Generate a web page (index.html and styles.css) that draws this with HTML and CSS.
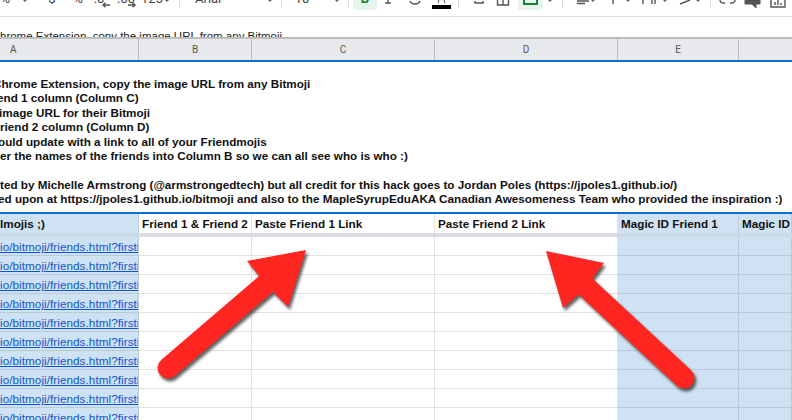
FILE: index.html
```html
<!DOCTYPE html>
<html lang="en">
<head>
<meta charset="utf-8">
<title>Friendmojis sheet</title>
<link rel="stylesheet" href="styles.css">
</head>
<body>
<div class="toolbar">
  <svg class="strip" width="792" height="16" viewBox="0 0 792 16">
    <g class="tt">
      <text x="10" y="3" text-anchor="end">100%</text>
      <text x="52" y="3" text-anchor="middle">$</text>
      <text x="78" y="3" text-anchor="middle">%</text>
      <text x="99" y="3" text-anchor="middle">.0</text>
      <text x="126" y="3" text-anchor="middle">.00</text>
      <text x="152" y="3" text-anchor="middle">123</text>
      <text x="195" y="3">Arial</text>
      <text x="302" y="3" text-anchor="middle">10</text>
    </g>
    <g class="ic">
      <path d="M110 5H103M105.500 2.800L103 5L105.500 7.200"/>
      <path d="M128 5H135M132.500 2.800L135 5L132.500 7.200"/>
      <path d="M410 1Q411 4 415 4Q419 4 420 1"/>
      <path d="M388 0V3M385 3H391"/>
      <path d="M475 1V3H483V1"/>
      <path d="M497.500 0V5H508.500V0M503 0V5"/>
      <path d="M577 1H589M577 3.500H585"/>
      <path d="M613 0V4"/>
      <path d="M643 0V4M652 0V4M655 0V4"/>
      <path d="M680 4L690 0"/>
      <path d="M720 0Q720 3 724 3H725M735 0Q735 3 731 3H730"/>
      <path d="M771 0V7H785V0M775 2V5M778 0V5M781 3V5"/>
    </g>
    <g class="caret">
      <path d="M23 0H27L25 2Z"/><path d="M165 0H169L167 2Z"/><path d="M268 0H272L270 2Z"/>
      <path d="M335 0H339L337 2Z"/><path d="M548 0H552L550 2Z"/><path d="M591 0H595L593 2Z"/>
      <path d="M626 0H630L628 2Z"/><path d="M663 0H667L665 2Z"/><path d="M696 0H700L698 2Z"/>
    </g>
    <g class="sep">
      <path d="M179.500 0V8M281.500 0V8M348.500 0V8M458.500 0V8M562.500 0V8M710.500 0V8"/>
    </g>
    <rect class="on" x="353" y="-3" width="24" height="13" rx="2"/>
    <rect class="on" x="518" y="-3" width="25" height="13" rx="2"/>
    <text class="bold" x="365" y="3" text-anchor="middle">B</text>
    <path class="merge" d="M524 0V4H537V0"/>
    <rect class="black" x="432" y="5" width="19" height="4"/>
    <path class="ink" d="M438 3L439 0M445 3L444 0"/>
    <path class="ink" d="M745 0H760V4H756V8L752 4H745Z"/>
  </svg>
</div>
<div class="formula">hrome Extension, copy the image URL from any Bitmoji</div>
<div class="cols">
  <div class="col a">A</div><div class="col b">B</div><div class="col c">C</div><div class="col d">D</div><div class="col e">E</div><div class="col f"></div>
</div>
<div class="notes">
  <p class="cut7">Chrome Extension, copy the image URL from any Bitmoji</p>
  <p class="cut3">end 1 column (Column C)</p>
  <p class="cut1">image URL for their Bitmoji</p>
  <p>riend 2 column (Column D)</p>
  <p class="cut2">ould update with a link to all of your Friendmojis</p>
  <p>er the names of the friends into Column B so we can all see who is who :)</p>
  <p>&nbsp;</p>
  <p>ted by Michelle Armstrong (@armstrongedtech) but all credit for this hack goes to Jordan Poles (https://jpoles1.github.io/)</p>
  <p class="cut2">ed upon at https://jpoles1.github.io/bitmoji and also to the MapleSyrupEduAKA Canadian Awesomeness Team who provided the inspiration :)</p>
</div>
<div class="sheet">
  <div class="row titles">
    <div class="cell blue flush">lmojis ;)</div><div class="cell">Friend 1 &amp; Friend 2</div><div class="cell">Paste Friend 1 Link</div><div class="cell">Paste Friend 2 Link</div><div class="cell blue">Magic ID Friend 1</div><div class="cell blue">Magic ID</div>
  </div>
  <div class="band"><span class="bb a2"></span><span class="bw"></span><span class="bb e2"></span><span class="bb f2"></span></div>
  <div class="row"><div class="cell blue"><a href="#">io/bitmoji/friends.html?firstid=</a></div><div class="cell"></div><div class="cell"></div><div class="cell"></div><div class="cell blue"></div><div class="cell blue"></div></div>
  <div class="row"><div class="cell blue"><a href="#">io/bitmoji/friends.html?firstid=</a></div><div class="cell"></div><div class="cell"></div><div class="cell"></div><div class="cell blue"></div><div class="cell blue"></div></div>
  <div class="row"><div class="cell blue"><a href="#">io/bitmoji/friends.html?firstid=</a></div><div class="cell"></div><div class="cell"></div><div class="cell"></div><div class="cell blue"></div><div class="cell blue"></div></div>
  <div class="row"><div class="cell blue"><a href="#">io/bitmoji/friends.html?firstid=</a></div><div class="cell"></div><div class="cell"></div><div class="cell"></div><div class="cell blue"></div><div class="cell blue"></div></div>
  <div class="row"><div class="cell blue"><a href="#">io/bitmoji/friends.html?firstid=</a></div><div class="cell"></div><div class="cell"></div><div class="cell"></div><div class="cell blue"></div><div class="cell blue"></div></div>
  <div class="row"><div class="cell blue"><a href="#">io/bitmoji/friends.html?firstid=</a></div><div class="cell"></div><div class="cell"></div><div class="cell"></div><div class="cell blue"></div><div class="cell blue"></div></div>
  <div class="row"><div class="cell blue"><a href="#">io/bitmoji/friends.html?firstid=</a></div><div class="cell"></div><div class="cell"></div><div class="cell"></div><div class="cell blue"></div><div class="cell blue"></div></div>
  <div class="row"><div class="cell blue"><a href="#">io/bitmoji/friends.html?firstid=</a></div><div class="cell"></div><div class="cell"></div><div class="cell"></div><div class="cell blue"></div><div class="cell blue"></div></div>
  <div class="row"><div class="cell blue"><a href="#">io/bitmoji/friends.html?firstid=</a></div><div class="cell"></div><div class="cell"></div><div class="cell"></div><div class="cell blue"></div><div class="cell blue"></div></div>
  <div class="row"><div class="cell blue"><a href="#">io/bitmoji/friends.html?firstid=</a></div><div class="cell"></div><div class="cell"></div><div class="cell"></div><div class="cell blue"></div><div class="cell blue"></div></div>
</div>
<svg class="arrows" width="792" height="420" viewBox="0 0 792 420">
  <g class="arrow">
    <path class="shaft" d="M168 368L266 284"/>
    <path class="tip" d="M306 250L247 261L260 277L273 292L288 307Z"/>
  </g>
  <g class="arrow">
    <path class="shaft" d="M684 378L585 286"/>
    <path class="tip" d="M546 251L604 263L592 279L579 294L563 308Z"/>
  </g>
</svg>
</body>
</html>
```
FILE: styles.css
```css
html,body{margin:0;padding:0;width:792px;height:420px;overflow:hidden;background:#fff}
body{position:relative;font-family:"Liberation Sans",Arial,sans-serif}

.toolbar{height:16px;border-bottom:1px solid #dadce0;overflow:hidden}
.strip{display:block}
.tt text{font:13px Roboto,sans-serif;fill:#444}
.ic path{fill:none;stroke:#555;stroke-width:1.400}
.caret path{fill:#666}
.sep path{stroke:#dadce0;stroke-width:1}
.on{fill:#e6f4ea}
.bold{font:700 13px Roboto,sans-serif;fill:#188038}
.merge{fill:none;stroke:#188038;stroke-width:2}
.black{fill:#000}
.ink{fill:#555;stroke:#555}

.formula{height:20px;overflow:hidden;font-size:11.500px;line-height:38px;color:#222;white-space:nowrap}

.cols{display:flex;height:21px;background:#e8e9ed;border-top:2px solid #bdbdbd;border-bottom:2px solid #0b6fd3;font-family:Roboto,sans-serif;font-size:10px;line-height:21px;color:#555}
.col{text-align:center;border-right:1px solid #bdbdbd;box-sizing:border-box}
.a{width:139px;text-align:left;padding-left:10px}
.b{width:113px}
.c,.d{width:183px}
.e{width:121px}
.f{width:53px;border:0}

.notes{height:150px;padding-top:15px;box-sizing:border-box;font-size:11.700px;font-weight:700;line-height:14.400px;color:#111;white-space:nowrap;overflow:hidden}
.notes p{margin:0}
.notes .cut7{margin-left:-7px}
.notes .cut3{margin-left:-3px}
.notes .cut2{margin-left:-2px}
.notes .cut1{margin-left:-1px}

.sheet{border-top:2px solid #0b6fd3}
.row{display:grid;grid-template-columns:139px 113px 183px 183px 121px 53px;height:19px}
.cell{box-sizing:border-box;height:19px;padding-left:3px;border-right:1px solid #e2e2e2;border-bottom:1px solid #e2e2e2;font-size:11.700px;line-height:19px;white-space:nowrap;overflow:hidden}
.cell.blue{background:#cfe2f3;border-color:#b8c9d8}
.row a{display:block;margin-left:-3px;font-size:11.700px;letter-spacing:.06px;color:#1155cc}
.titles{font-weight:700;color:#111}
.titles .cell{border-bottom:0}
.flush{padding-left:0}
.band{display:flex;height:4px}
.band span{display:block;height:4px}
.bb{background:#cdd9e6}
.bw{width:479px;background:#dadce2}
.a2{width:139px}
.e2{width:121px}
.f2{width:53px}

.arrows{position:absolute;left:0;top:0;pointer-events:none}
.arrow{filter:drop-shadow(2px 3px 1.500px rgba(30,30,30,.7))}
.shaft{fill:none;stroke:#ff2520;stroke-width:21;stroke-linecap:round}
.tip{fill:#ff2520}
```
